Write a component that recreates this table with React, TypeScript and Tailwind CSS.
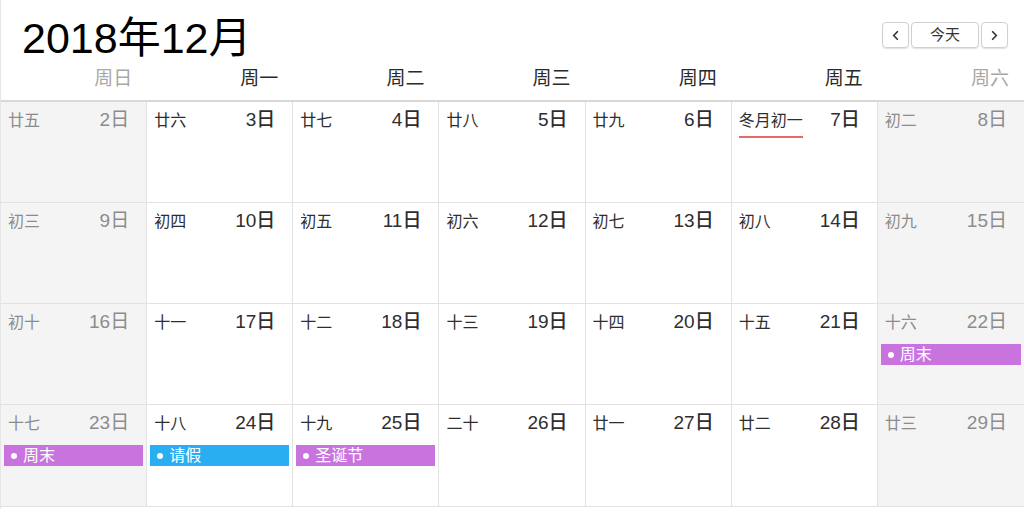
import React from 'react';
import { ChevronLeft, ChevronRight } from 'lucide-react';

interface DayCell {
  lunar: string;
  day: number;
  event?: { title: string; color: string };
  underline?: boolean;
}

const weekdays = ['周日', '周一', '周二', '周三', '周四', '周五', '周六'];

const rows: DayCell[][] = [
  [
    { lunar: '廿五', day: 2 },
    { lunar: '廿六', day: 3 },
    { lunar: '廿七', day: 4 },
    { lunar: '廿八', day: 5 },
    { lunar: '廿九', day: 6 },
    { lunar: '冬月初一', day: 7, underline: true },
    { lunar: '初二', day: 8 },
  ],
  [
    { lunar: '初三', day: 9 },
    { lunar: '初四', day: 10 },
    { lunar: '初五', day: 11 },
    { lunar: '初六', day: 12 },
    { lunar: '初七', day: 13 },
    { lunar: '初八', day: 14 },
    { lunar: '初九', day: 15 },
  ],
  [
    { lunar: '初十', day: 16 },
    { lunar: '十一', day: 17 },
    { lunar: '十二', day: 18 },
    { lunar: '十三', day: 19 },
    { lunar: '十四', day: 20 },
    { lunar: '十五', day: 21 },
    { lunar: '十六', day: 22, event: { title: '周末', color: 'bg-[#c974de]' } },
  ],
  [
    { lunar: '十七', day: 23, event: { title: '周末', color: 'bg-[#c974de]' } },
    { lunar: '十八', day: 24, event: { title: '请假', color: 'bg-[#2aaef2]' } },
    { lunar: '十九', day: 25, event: { title: '圣诞节', color: 'bg-[#c974de]' } },
    { lunar: '二十', day: 26 },
    { lunar: '廿一', day: 27 },
    { lunar: '廿二', day: 28 },
    { lunar: '廿三', day: 29 },
  ],
];

const Cell: React.FC<{ cell: DayCell; weekend: boolean; last: boolean }> = ({ cell, weekend, last }) => (
  <div
    className={`flex flex-col ${last ? '' : 'border-r'} border-[#e2e2e2] ${
      weekend ? 'bg-[#f4f4f4] text-[#8c8c8c]' : 'bg-white text-[#2e2e2e]'
    }`}
  >
    <div className="flex items-center justify-between pl-[7px] pr-[17px] pt-[6px] h-[31px]">
      <span className="relative text-[16px]">
        {cell.lunar}
        {cell.underline && (
          <span className="absolute left-0 right-0 -bottom-[5px] h-[2px] bg-[#e46a6a]" />
        )}
      </span>
      <span className={`text-[19px] ${weekend ? '' : 'font-medium'}`}>{cell.day}日</span>
    </div>
    {cell.event && (
      <div
        className={`mx-[3px] mt-[9px] h-[21px] flex items-center pl-[7px] text-white text-[16px] ${cell.event.color}`}
      >
        <span className="w-[6px] h-[6px] rounded-full bg-white mr-[6px]" />
        {cell.event.title}
      </div>
    )}
  </div>
);

export default function App() {
  return (
    <div
      className="w-[1024px] h-[509px] bg-white overflow-hidden border-l border-[#e6e6e6] flex flex-col"
      style={{ fontFamily: '"Liberation Sans", "Noto Sans CJK SC", sans-serif' }}
    >
      <div className="h-[100px] flex flex-col">
        <div className="flex items-start justify-between">
          <h1 className="pl-[21px] pt-[13px] text-[43px] leading-[50px] text-black font-normal">2018年12月</h1>
          <div className="flex gap-[2px] pt-[22px] pr-[16px]">
            <button className="w-[27px] h-[26px] flex items-center justify-center border border-[#d0d0d0] rounded-[4px] shadow-[0_1px_1px_rgba(0,0,0,0.12)] text-[#333]">
              <ChevronLeft size={15} strokeWidth={2.75} />
            </button>
            <button className="w-[68px] h-[26px] flex items-center justify-center border border-[#d0d0d0] rounded-[4px] shadow-[0_1px_1px_rgba(0,0,0,0.12)] text-[15px] text-[#333]">
              今天
            </button>
            <button className="w-[27px] h-[26px] flex items-center justify-center border border-[#d0d0d0] rounded-[4px] shadow-[0_1px_1px_rgba(0,0,0,0.12)] text-[#333]">
              <ChevronRight size={15} strokeWidth={2.75} />
            </button>
          </div>
        </div>
        <div className="grid grid-cols-7 mt-[2px]">
          {weekdays.map((w, i) => (
            <div
              key={w}
              className={`text-right pr-[15px] text-[19px] leading-[28px] ${
                i === 0 || i === 6 ? 'text-[#a8a8a8]' : 'text-[#2a2a2a]'
              }`}
            >
              {w}
            </div>
          ))}
        </div>
      </div>
      <div className="border-t-2 border-[#d8d8d8] grid grid-rows-4 h-[407px] border-b border-b-[#e2e2e2]">
        {rows.map((row, ri) => (
          <div key={ri} className={`grid grid-cols-7 ${ri < 3 ? 'border-b border-[#e2e2e2]' : ''}`}>
            {row.map((cell, ci) => (
              <Cell key={cell.day} cell={cell} weekend={ci === 0 || ci === 6} last={ci === 6} />
            ))}
          </div>
        ))}
      </div>
    </div>
  );
}
